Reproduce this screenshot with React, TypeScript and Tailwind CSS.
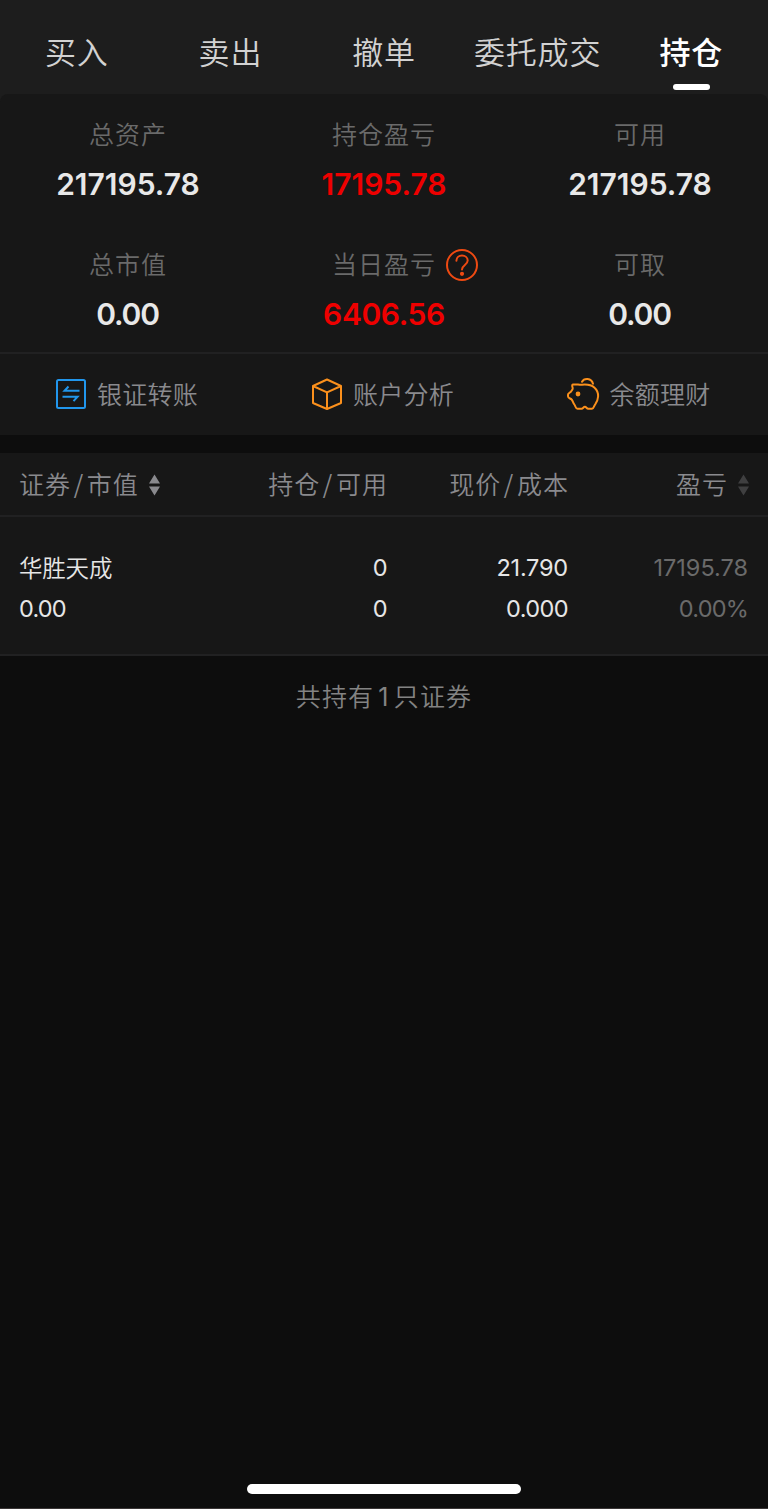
import React from 'react';
import clsx from 'clsx';

interface SummaryItem {
  label: string;
  value: string;
  isProfit?: boolean;
  hasHelp?: boolean;
  tracking?: string;
}

interface Holding {
  name: string;
  marketValue: string;
  position: string;
  available: string;
  price: string;
  cost: string;
  profit: string;
  profitRate: string;
}

const tabs = ['买入', '卖出', '撤单', '委托成交', '持仓'];

const summary: SummaryItem[] = [
  { label: '总资产', value: '217195.78' },
  { label: '持仓盈亏', value: '17195.78', isProfit: true },
  { label: '可用', value: '217195.78' },
  { label: '总市值', value: '0.00', tracking: 'tracking-[-1.2px] pr-px' },
  { label: '当日盈亏', value: '6406.56', isProfit: true, hasHelp: true, tracking: 'tracking-[-0.4px]' },
  { label: '可取', value: '0.00', tracking: 'tracking-[-1.2px] pr-px' },
];

const actions = [
  { label: '银证转账', icon: <TransferIcon /> },
  { label: '账户分析', icon: <CubeIcon /> },
  { label: '余额理财', icon: <PiggyIcon /> },
];

const holdings: Holding[] = [
  {
    name: '华胜天成',
    marketValue: '0.00',
    position: '0',
    available: '0',
    price: '21.790',
    cost: '0.000',
    profit: '17195.78',
    profitRate: '0.00%',
  },
];

export default function App() {
  return (
    <div className="flex h-[1509px] w-[768px] flex-col overflow-hidden border-b border-[#3a3636] bg-[#0d0d0d] font-['Inter','Noto_Sans_CJK_SC',sans-serif] whitespace-nowrap">
      <div className="bg-[#1d1d1d]">
        <TabBar active="持仓" />
        <section className="rounded-t-lg bg-[#171717]">
          <div className="grid h-[260px] grid-cols-3 border-b-2 border-[#212122] pt-[21px]">
            {summary.map((item) => (
              <SummaryCell key={item.label} item={item} />
            ))}
          </div>
          <div className="grid h-[81px] grid-cols-3">
            {actions.map((action) => (
              <button key={action.label} className="flex items-center justify-center pr-[3px] pb-px">
                {action.icon}
                <span className="pt-[3px] text-[25px] font-[350] tracking-[0.2px] text-[#8a8a8e]">
                  {action.label}
                </span>
              </button>
            ))}
          </div>
        </section>
      </div>

      <section className="mt-[18px] bg-[#171717]">
        <div className="grid h-16 grid-cols-[188px_181px_181px_180px] items-center border-b-2 border-[#212122] px-[19px] pt-[3px] text-[25px] font-[350] tracking-[1px] text-[#8a8a8e]">
          <div className="flex items-center">
            证券<Slash />市值
            <SortIcon className="mb-0.5 ml-[9px]" />
          </div>
          <div className="text-right">持仓<Slash />可用</div>
          <div className="text-right">现价<Slash />成本</div>
          <div className="flex items-center justify-end">
            盈亏
            <SortIcon className="mb-0.5 ml-[9px] opacity-35" />
          </div>
        </div>
        {holdings.map((holding) => (
          <HoldingRow key={holding.name} holding={holding} />
        ))}
      </section>

      <p className="mt-[21px] text-center text-[25px] leading-[40px] font-[350] tracking-[1.2px] text-[#838383]">
        共持有<span className="mx-1 font-normal">{holdings.length}</span>只证券
      </p>

      <div className="mx-auto mt-auto mb-3.5 h-2.5 w-[274px] rounded-full bg-white" />
    </div>
  );
}

// Sub-components
function TabBar({ active }: { active: string }) {
  return (
    <nav className="grid h-[94px] grid-cols-5">
      {tabs.map((tab) => (
        <button
          key={tab}
          className={clsx(
            'flex flex-col items-center pt-[31px] text-[31px] leading-[44px] tracking-[0.8px]',
            tab === active ? 'font-medium text-white' : 'font-[350] text-[#d2d2d2]',
          )}
        >
          {tab}
          {tab === active && <span className="mt-[9px] h-1.5 w-[37px] rounded-full bg-white" />}
        </button>
      ))}
    </nav>
  );
}

function SummaryCell({ item }: { item: SummaryItem }) {
  return (
    <div className="flex h-[130px] flex-col items-center">
      <div className="relative text-[25px] leading-[40px] font-[350] tracking-[1px] text-[#6a6a6a]">
        {item.label}
        {item.hasHelp && <HelpIcon />}
      </div>
      <div
        className={clsx(
          'mt-2.5 text-[30px] leading-[38px] font-semibold',
          item.isProfit ? 'text-[#ee0000]' : 'text-[#e8e8e8]',
          item.tracking,
        )}
      >
        {item.value}
      </div>
    </div>
  );
}

function HoldingRow({ holding }: { holding: Holding }) {
  return (
    <div className="grid h-[139px] grid-cols-[188px_180px_181px_180px] content-start border-b-2 border-[#212122] pt-[30px] pr-5 pl-[19px] text-right text-[23.5px] leading-[41px] text-[#e6e6e6]">
      <div className="pt-px text-left font-[350] tracking-[-0.2px]">{holding.name}</div>
      <div className="tracking-[-0.7px]">{holding.position}</div>
      <div className="tracking-[-0.2px]">{holding.price}</div>
      <div className="text-[#6a6a6a]">{holding.profit}</div>
      <div className="-mt-px text-left tracking-[-0.8px]">{holding.marketValue}</div>
      <div className="-mt-px tracking-[-0.7px]">{holding.available}</div>
      <div className="-mt-px tracking-[-0.6px]">{holding.cost}</div>
      <div className="-mt-px tracking-[-0.8px] text-[#6a6a6a]">{holding.profitRate}</div>
    </div>
  );
}

function Slash() {
  return <span className="mx-[3px] inline-block scale-y-110 skew-x-[-4deg]">/</span>;
}

function SortIcon({ className }: { className?: string }) {
  return (
    <svg width="12" height="22" viewBox="0 0 12 22" className={className} fill="#8a8a8e">
      <path d="M6.500 .5 12 9.500H1ZM6.500 21.500 1 12.500h11Z" />
    </svg>
  );
}

function HelpIcon() {
  return (
    <svg
      width="34"
      height="34"
      viewBox="0 0 34 34"
      className="absolute top-[3px] left-full ml-[9px]"
      fill="none"
      stroke="#ee4a12"
      strokeWidth="2"
      strokeLinecap="round"
    >
      <circle cx="17" cy="17" r="15" />
      <path d="M11.4 12.800c0-3.200 2.500-5.300 5.600-5.300s5.700 2 5.700 5.100c0 4.100-5.700 4.600-5.700 8.800" />
      <circle cx="17" cy="25.800" r="1.100" fill="#ee4a12" />
    </svg>
  );
}

function TransferIcon() {
  return (
    <svg width="32" height="32" viewBox="0 0 32 32" className="mr-2.5" fill="none" stroke="#2196ec" strokeWidth="2">
      <rect x="2" y="2" width="28" height="28" rx="1.5" />
      <path d="M24.500 12.800H9.500l4-4.300M7.500 18.800h15l-4 4.300" />
    </svg>
  );
}

function CubeIcon() {
  return (
    <svg
      width="32"
      height="32"
      viewBox="0 0 32 32"
      className="mr-2.5"
      fill="none"
      stroke="#fb901c"
      strokeWidth="2"
      strokeLinejoin="round"
    >
      <path d="M16 1.500 30 8v17L16 31 2 25V8ZM2 8l14 6.300L30 8M16 14.300V31" />
    </svg>
  );
}

function PiggyIcon() {
  return (
    <svg
      width="34"
      height="34"
      viewBox="0 0 34 34"
      className="mr-2.5 -ml-px"
      fill="none"
      stroke="#fb901c"
      strokeWidth="2"
      strokeLinecap="round"
      strokeLinejoin="round"
    >
      <path d="M7 7.500C10.500 7 13 8 16 7.700 20 7.300 25.500 8 28.300 10.600 31 13 32.300 16 32.100 19.500 31.900 23 31 25 29.200 27.300 27.800 29 28 31.700 26 31.700H22.200C20.600 31.700 20.400 29.800 18.900 29.800S17.200 31.700 15.600 31.700H11.600C9.400 31.700 9.700 29.200 8.400 27.500 7 25.700 6.800 23.800 5.600 22.500 4.400 21.300 2 21.300 2 19.300V17.700C2 16 4.300 15.800 5.200 14.200 6 12.800 6.800 12.500 6.700 11.300 6.600 10 5.300 8 7 7.500Z" />
      <path d="M16 4.800C18 .8 25.500 .5 27 6.800" />
      <circle cx="12" cy="17" r="1.400" fill="#fb901c" />
    </svg>
  );
}
